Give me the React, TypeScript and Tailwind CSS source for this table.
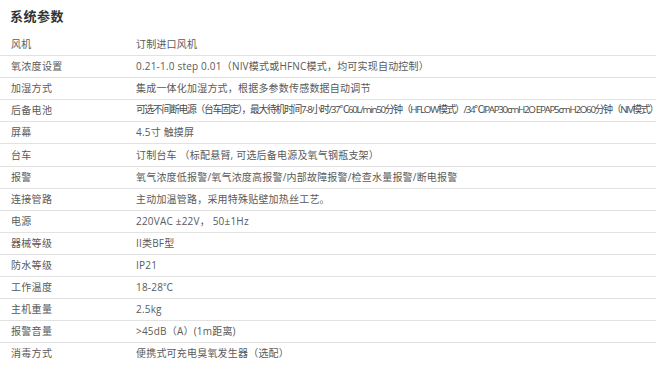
const rows: [string, string][] = [
  ['风机', '订制进口风机'],
  ['氧浓度设置', '0.21-1.0 step 0.01（NIV模式或HFNC模式，均可实现自动控制）'],
  ['加湿方式', '集成一体化加湿方式，根据多参数传感数据自动调节'],
  [
    '后备电池',
    '可选不间断电源（台车固定），最大待机时间7-8小时/37℃60L/min50分钟（HFLOW模式）/34℃IPAP30cmH2O EPAP5cmH2O60分钟（NIV模式）',
  ],
  ['屏幕', '4.5寸 触摸屏'],
  ['台车', '订制台车 （标配悬臂, 可选后备电源及氧气钢瓶支架）'],
  ['报警', '氧气浓度低报警/氧气浓度高报警/内部故障报警/检查水量报警/断电报警'],
  ['连接管路', '主动加温管路，采用特殊贴壁加热丝工艺。'],
  ['电源', '220VAC ±22V， 50±1Hz'],
  ['器械等级', 'II类BF型'],
  ['防水等级', 'IP21'],
  ['工作温度', '18-28℃'],
  ['主机重量', '2.5kg'],
  ['报警音量', '>45dB（A）(1m距离)'],
  ['消毒方式', '便携式可充电臭氧发生器（选配）'],
];

export default function App() {
  return (
    <div
      className="w-[660px] h-[371px] bg-white overflow-hidden"
      style={{ fontFamily: '"Open Sans", "Noto Sans CJK SC", sans-serif' }}
    >
      <div className="w-[656px]">
        <h2 className="h-[33px] flex items-center pl-[10px] pt-[1px] text-[13px] font-bold text-[#333] tracking-[0.5px]">
          系统参数
        </h2>
        <div className="flex flex-col">
          {rows.map(([label, value], i) => (
            <div
              key={label}
              className={
                'h-[22.1px] flex items-center text-[10px] text-[#5a5a5a] ' +
                (i > 0 ? 'border-t border-[#e2e2e2]' : '')
              }
            >
              <div className="w-[136px] pl-[11px] shrink-0 tracking-[0.3px]">{label}</div>
              <div
                className={
                  'whitespace-nowrap ' +
                  (label === '后备电池' ? 'text-[9.8px] tracking-[-1.3px] text-[#4a4a4a]' : 'tracking-[0.2px]')
                }
              >
                {value}
              </div>
            </div>
          ))}
        </div>
      </div>
    </div>
  );
}
